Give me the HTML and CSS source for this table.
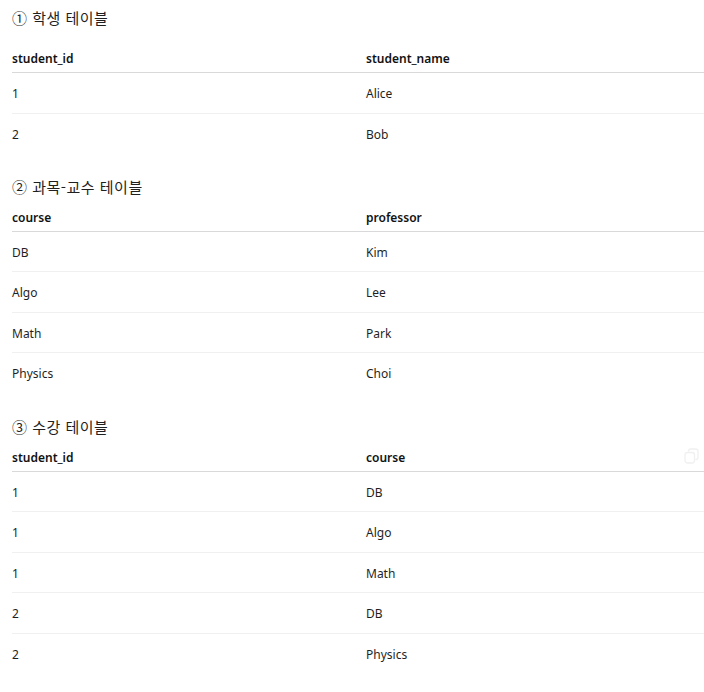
FILE: index.html
```html
<!DOCTYPE html>
<html lang="ko">
<head>
<meta charset="utf-8">
<link rel="stylesheet" href="styles.css">
</head>
<body>
<div class="doc">
  <p class="title title-first">① 학생 테이블</p>
  <div class="tbl-wrap">
    <table class="tbl">
      <thead><tr><th>student_id</th><th>student_name</th></tr></thead>
      <tbody>
        <tr><td>1</td><td>Alice</td></tr>
        <tr><td>2</td><td>Bob</td></tr>
      </tbody>
    </table>
  </div>

  <p class="title">② 과목-교수 테이블</p>
  <div class="tbl-wrap">
    <table class="tbl">
      <thead><tr><th>course</th><th>professor</th></tr></thead>
      <tbody>
        <tr><td>DB</td><td>Kim</td></tr>
        <tr><td>Algo</td><td>Lee</td></tr>
        <tr><td>Math</td><td>Park</td></tr>
        <tr><td>Physics</td><td>Choi</td></tr>
      </tbody>
    </table>
  </div>

  <p class="title">③ 수강 테이블</p>
  <div class="tbl-wrap">
    <table class="tbl">
      <thead><tr><th>student_id</th><th>course</th></tr></thead>
      <tbody>
        <tr><td>1</td><td>DB</td></tr>
        <tr><td>1</td><td>Algo</td></tr>
        <tr><td>1</td><td>Math</td></tr>
        <tr><td>2</td><td>DB</td></tr>
        <tr><td>2</td><td>Physics</td></tr>
      </tbody>
    </table>
    <svg class="copy-icon" width="15" height="16" viewBox="0 0 15 16" fill="none" stroke="#f0f0f0" stroke-width="1.3">
      <rect x="1" y="4.5" width="9.5" height="10.5" rx="2.5"/>
      <path d="M4.5 3.5V3.2A2.2 2.2 0 0 1 6.7 1H11.8A2.2 2.2 0 0 1 14 3.2V9.3A2.2 2.2 0 0 1 11.8 11.5H11.5"/>
    </svg>
  </div>
</div>
</body>
</html>
```

FILE: styles.css
```css
html, body {
  margin: 0;
  padding: 0;
  background: #ffffff;
}

body {
  font-family: "Noto Sans", "Noto Sans CJK KR", sans-serif;
  color: #1f1f1f;
  font-size: 12px;
}

.doc {
  padding: 8px 0 0 12px;
  width: 692px;
}

.title {
  margin: 23.5px 0 4px;
  font-family: "Noto Sans CJK KR", "Noto Sans", sans-serif;
  font-size: 15px;
  letter-spacing: 0.5px;
  line-height: 20px;
  color: #1f1f1f;
}

.title-first {
  margin-top: 0;
  margin-bottom: 14px;
}

.tbl-wrap {
  position: relative;
}

.tbl {
  width: 100%;
  border-collapse: collapse;
  table-layout: fixed;
}

.tbl th,
.tbl td {
  text-align: left;
  padding-left: 8px;
  padding-right: 8px;
  line-height: 18px;
}

.tbl th:first-child,
.tbl td:first-child {
  padding-left: 0;
}

.tbl th {
  font-weight: 600;
  color: #111111;
  padding-top: 8px;
  padding-bottom: 4px;
  border-bottom: 1px solid #d9d9d9;
}

.tbl td {
  padding-top: 12px;
  padding-bottom: 9.6px;
  border-bottom: 1px solid #f0f0f0;
}

.tbl tbody tr:last-child td {
  border-bottom: none;
}

.copy-icon {
  position: absolute;
  top: 7px;
  right: 5px;
}
```
